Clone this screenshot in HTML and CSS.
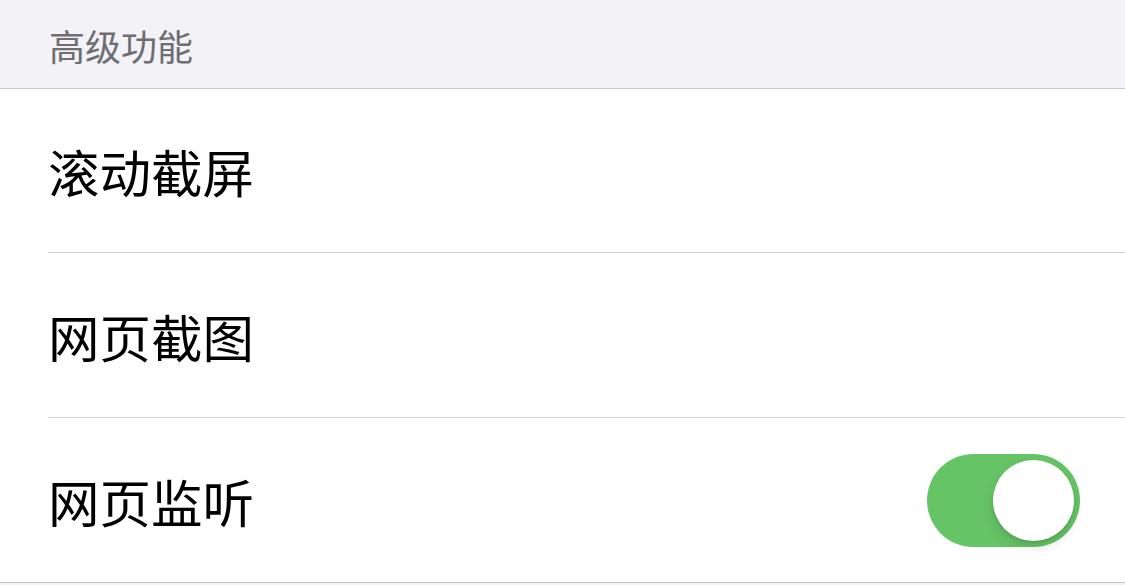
FILE: index.html
```html
<!DOCTYPE html>
<html lang="zh-CN">
<head>
<meta charset="utf-8">
<link rel="stylesheet" href="styles.css">
</head>
<body>
<div class="page">
  <div class="section-header"><span class="section-title">高级功能</span></div>
  <div class="group">
    <div class="row"><div class="row-inner first"><span class="row-label">滚动截屏</span></div></div>
    <div class="row"><div class="row-inner"><span class="row-label">网页截图</span></div></div>
    <div class="row"><div class="row-inner last"><span class="row-label">网页监听</span><div class="toggle on"><div class="knob"></div></div></div></div>
  </div>
</div>
</body>
</html>
```
FILE: styles.css
```css
html, body {
  margin: 0;
  padding: 0;
  background: #f2f2f7;
  width: 1125px;
  height: 585px;
  overflow: hidden;
}
.page {
  font-family: "Noto Sans CJK SC", "Noto Sans", sans-serif;
}
.section-header {
  height: 89px;
  box-sizing: border-box;
  padding-left: 49px;
  display: flex;
  align-items: center;
  background: #f2f2f7;
  border-bottom: 1px solid #c8c7cc;
}
.section-title {
  font-size: 36px;
  color: #6d6d72;
  line-height: 1;
  margin-top: 2px;
}
.group {
  background: #fff;
  border-bottom: 1px solid #c8c7cc;
}
.row {
  padding-left: 48px;
}
.row-inner {
  height: 164px;
  display: flex;
  align-items: center;
  justify-content: space-between;
  border-bottom: 1px solid #d0d0d4;
  padding-right: 45px;
}
.row-inner.first {
  height: 163px;
}
.row-inner.last {
  border-bottom: none;
}
.row-label {
  font-size: 51.5px;
  color: #000;
  line-height: 1;
  margin-top: 1px;
}
.toggle {
  width: 153px;
  height: 93px;
  border-radius: 47px;
  background: #65c466;
  box-sizing: border-box;
  padding: 6px;
  display: flex;
  justify-content: flex-end;
  align-items: center;
  margin-top: 0;
}
.knob {
  width: 81px;
  height: 81px;
  border-radius: 50%;
  background: #fff;
  box-shadow: 0 6px 12px rgba(0,0,0,0.12), 0 2px 3px rgba(0,0,0,0.08);
}
```
